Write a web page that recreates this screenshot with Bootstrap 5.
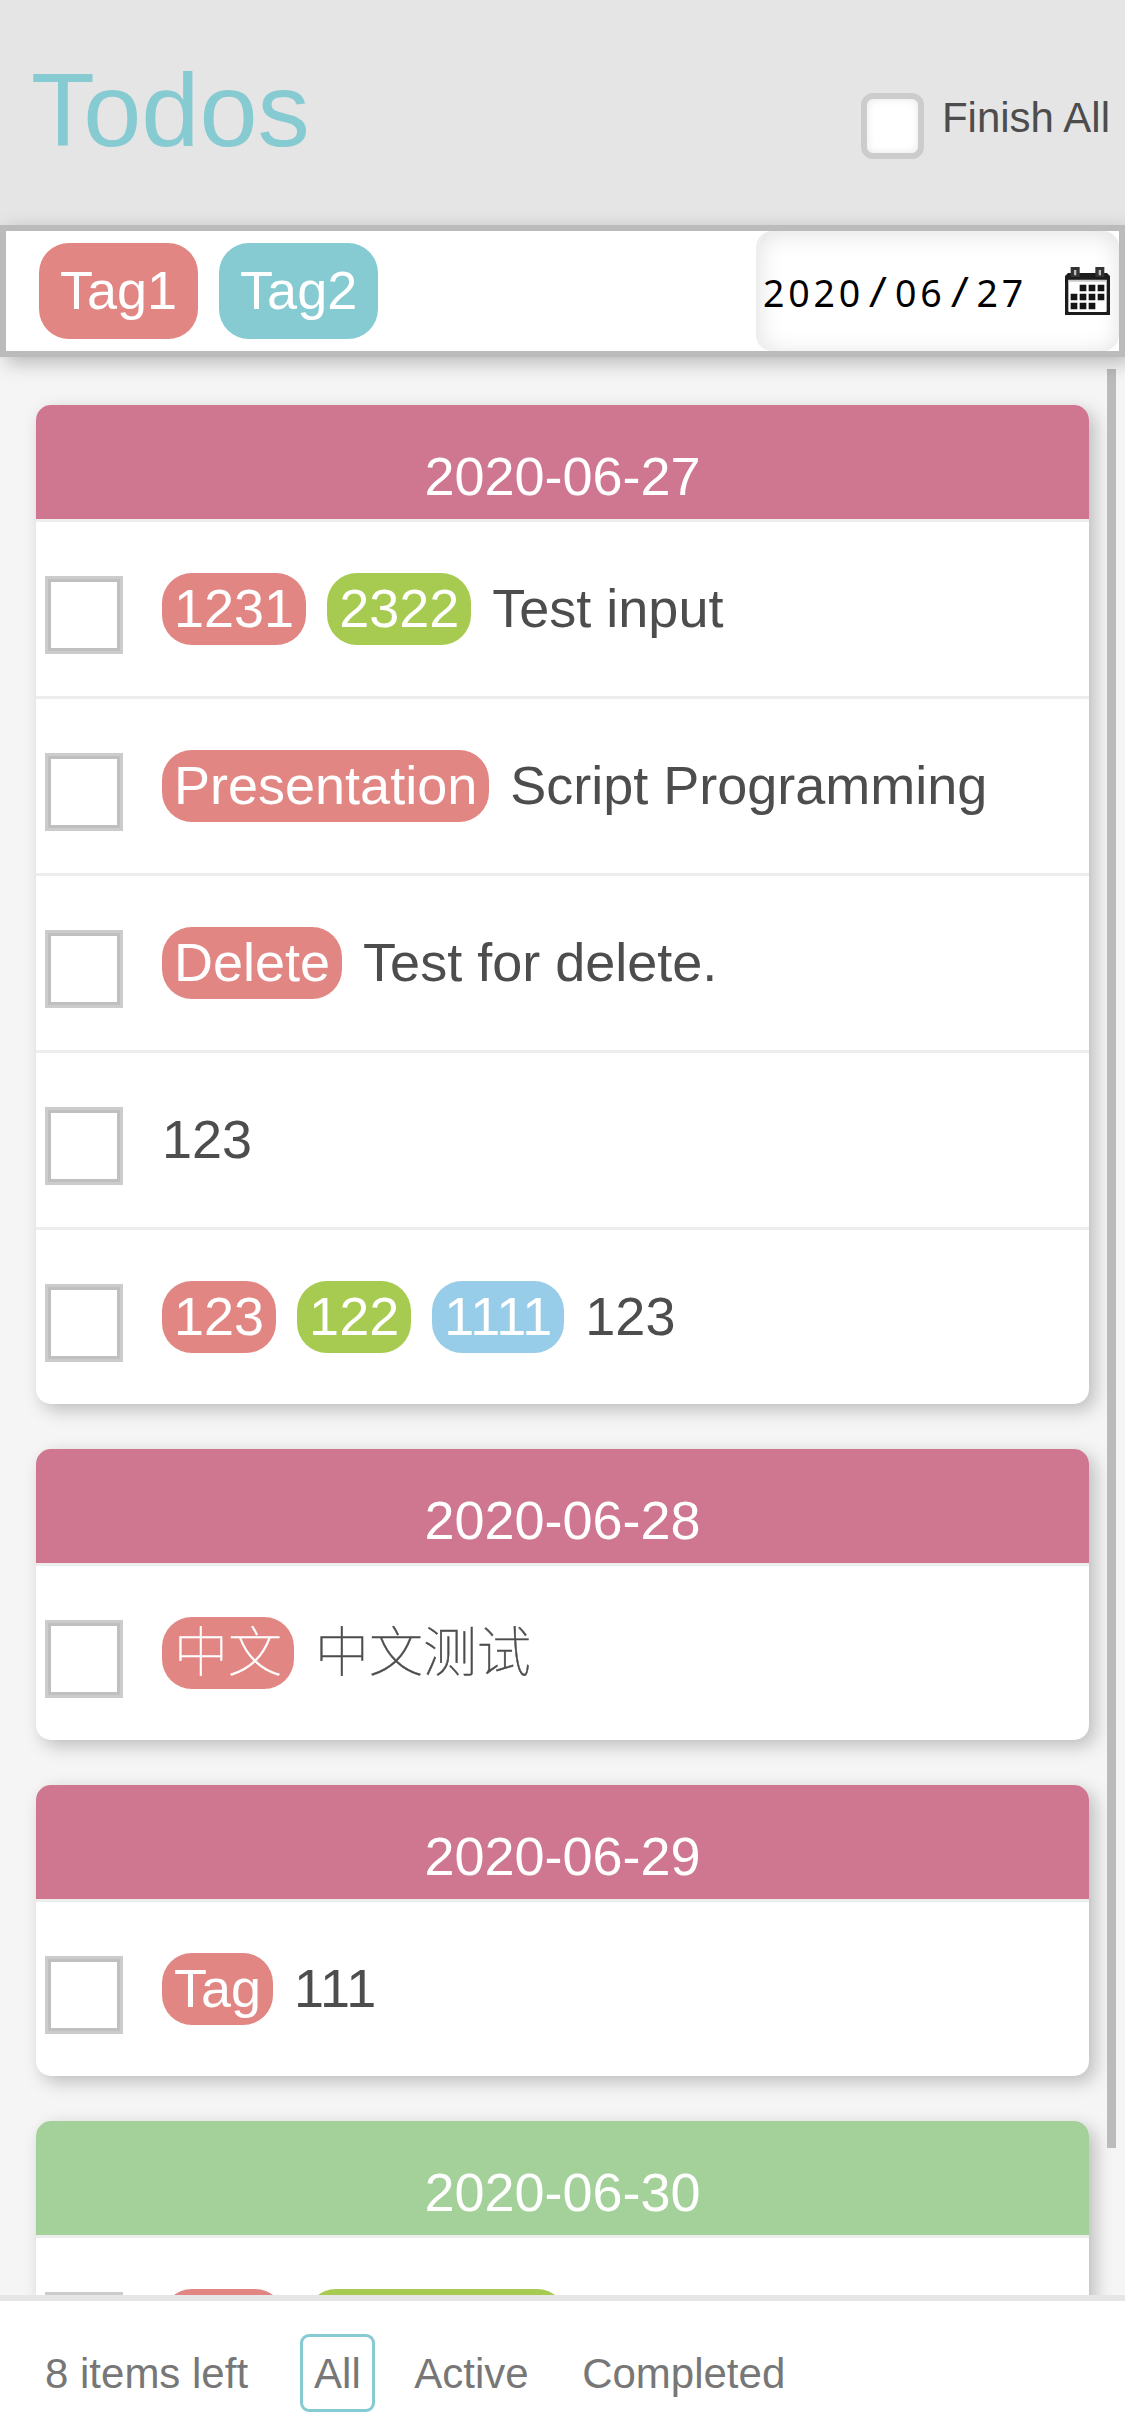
<!DOCTYPE html>
<html lang="en">
<head>
<meta charset="utf-8">
<meta name="viewport" content="width=device-width, initial-scale=1">
<title>Todos</title>
<link href="https://cdn.jsdelivr.net/npm/bootstrap@5.3.0/dist/css/bootstrap.min.css" rel="stylesheet">
<style>
  body { font-family: "Liberation Sans", "Noto Sans CJK SC", sans-serif; font-weight: 100; font-size: 54px; line-height: 1; color: #4d4d4d; background: #f5f5f5; }
  .app { height: 2436px; }
  .app-head { height: 225px; background: #e5e5e5; padding: 0 15px 0 31px; }
  .app-title { font-size: 104.5px; font-weight: 100; line-height: 1; color: #86cad2; margin-top: -4px; }
  .finish { font-size: 42px; gap: 18px; }
  .finish-box { width: 63px; height: 66px; border: 6px solid #ccc; border-radius: 12px; background: #fff; box-shadow: inset 0 0 9px rgba(0,0,0,.1); margin-top: 27px; }
  .finish-text { margin-top: 10px; }
  .filter-bar { height: 132px; border: 6px solid #bbb; background: #fff; box-shadow: 6px 6px 18px rgba(0,0,0,.25); z-index: 2; }
  .filter-tags { gap: 21px; padding-left: 33px; }
  .pill { display: inline-flex; align-items: center; height: 72px; padding: 0 12px 2px; border-radius: 30px; color: #fff; white-space: nowrap; }
  .pill-lg { height: 96px; padding: 0 21px 2px; }
  .c-red { background: #e18683; } .c-teal { background: #86cad2; } .c-lime { background: #a6cb50; } .c-blue { background: #97cde9; }
  .date-box { width: 363px; border-left: 3px solid #eee; border-radius: 16px; padding: 0 9px 0 4px; box-shadow: inset 0 3px 24px rgba(0,0,0,.12); color: #000; font-family: "Noto Sans", sans-serif; font-size: 37.5px; font-weight: 400; letter-spacing: 3.8px; }
  .date-box i { display: inline-block; width: 31px; font-style: normal; font-size: 42px; line-height: 1; letter-spacing: 0; text-align: center; padding-right: 3px; transform: skewX(-5deg); }
  .list-area { padding: 48px 36px 0; gap: 45px; }
  .day { border-radius: 15px; box-shadow: 6px 6px 18px rgba(0,0,0,.23); background: #fff; }
  .day-head { height: 114px; padding-top: 29px; line-height: 85px; background: #cf7691; color: #fff; border-radius: 15px 15px 0 0; }
  .day-head.today { background: #a3d199; }
  .todo { height: 177px; border-top: 3px solid #ededed; padding-left: 9px; gap: 39px; }
  .todo-box { width: 78px; height: 78px; border: 3px solid #ccc; box-shadow: inset 0 0 0 3px #bfbfbf; margin-top: 12px; }
  .todo-text { gap: 21px; }
  .todo-label { padding-bottom: 2px; }
  .zh { -webkit-text-stroke: .45px currentColor; }
  .zh .todo-label, .zh .pill { padding-bottom: 0; }
  .thumb { right: 9px; top: 12px; width: 9px; height: 1779px; background: #bbb; }
  .app-foot { height: 141px; border-top: 6px solid #e6e6e6; background: #fff; padding: 9px 0 0 45px; font-size: 42px; color: #777; z-index: 3; }
  .count { padding-top: 2px; }
  .view { height: 78px; padding: 0 11.5px; border: 3px solid transparent; border-radius: 9px; line-height: 74px; }
  .view.on { border-color: #86cad2; }
  .views { gap: 24.5px; margin-left: 51.5px; }
</style>
</head>
<body class="overflow-hidden">
<div class="app d-flex flex-column overflow-hidden">
  <header class="app-head d-flex justify-content-between align-items-center flex-shrink-0">
    <h1 class="app-title mb-0">Todos</h1>
    <div class="finish d-flex align-items-center">
      <span class="finish-box"></span><span class="finish-text">Finish All</span>
    </div>
  </header>
  <div class="filter-bar d-flex justify-content-between position-relative flex-shrink-0">
    <div class="filter-tags d-flex align-items-center">
      <span class="pill pill-lg c-red">Tag1</span><span class="pill pill-lg c-teal">Tag2</span>
    </div>
    <div class="date-box d-flex align-items-center justify-content-between">
      <span>2020<i>/</i>06<i>/</i>27</span>
      <svg width="45" height="48" viewBox="0 0 135 144">
        <path d="M5 40H130V139H5Z" fill="#fff"/>
        <path d="M9 18H126L135 27V144H0V27ZM10 39V132Q10 135 13 135H122Q125 135 125 132V39Z" fill="#1c1c1c" fill-rule="evenodd"/>
        <path d="M10 38H125V44H10Z" fill="#c9c9c9"/>
        <path d="M17 0H44V30H17ZM91 0H118V30H91Z" fill="#333"/>
        <path d="M27 9H34V25H27ZM101 9H108V25H101Z" fill="#bbb"/>
        <path d="M44 53h20v20h-20zM71 53h20v20h-20zM98 53h20v20h-20zM17 80h20v20h-20zM44 80h20v20h-20zM71 80h20v20h-20zM98 80h20v20h-20zM17 107h20v20h-20zM44 107h20v20h-20zM71 107h20v20h-20z" fill="#151515"/>
      </svg>
    </div>
  </div>
  <main class="list-area d-flex flex-column flex-grow-1 position-relative overflow-hidden">
    <section class="day flex-shrink-0">
      <div class="day-head text-center">2020-06-27</div>
      <div class="todo d-flex align-items-center"><span class="todo-box"></span><div class="todo-text d-flex align-items-center"><span class="pill c-red">1231</span><span class="pill c-lime">2322</span><span class="todo-label">Test input</span></div></div>
      <div class="todo d-flex align-items-center"><span class="todo-box"></span><div class="todo-text d-flex align-items-center"><span class="pill c-red">Presentation</span><span class="todo-label">Script Programming</span></div></div>
      <div class="todo d-flex align-items-center"><span class="todo-box"></span><div class="todo-text d-flex align-items-center"><span class="pill c-red">Delete</span><span class="todo-label">Test for delete.</span></div></div>
      <div class="todo d-flex align-items-center"><span class="todo-box"></span><div class="todo-text d-flex align-items-center"><span class="todo-label">123</span></div></div>
      <div class="todo d-flex align-items-center"><span class="todo-box"></span><div class="todo-text d-flex align-items-center"><span class="pill c-red">123</span><span class="pill c-lime">122</span><span class="pill c-blue">1111</span><span class="todo-label">123</span></div></div>
    </section>
    <section class="day flex-shrink-0">
      <div class="day-head text-center">2020-06-28</div>
      <div class="todo zh d-flex align-items-center"><span class="todo-box"></span><div class="todo-text d-flex align-items-center"><span class="pill c-red">中文</span><span class="todo-label">中文测试</span></div></div>
    </section>
    <section class="day flex-shrink-0">
      <div class="day-head text-center">2020-06-29</div>
      <div class="todo d-flex align-items-center"><span class="todo-box"></span><div class="todo-text d-flex align-items-center"><span class="pill c-red">Tag</span><span class="todo-label">111</span></div></div>
    </section>
    <section class="day flex-shrink-0">
      <div class="day-head today text-center">2020-06-30</div>
      <div class="todo d-flex align-items-center"><span class="todo-box"></span><div class="todo-text d-flex align-items-center"><span class="pill c-red" style="width:123px"></span><span class="pill c-lime" style="width:261px"></span></div></div>
    </section>
    <div class="thumb position-absolute"></div>
  </main>
  <footer class="app-foot d-flex align-items-center position-relative flex-shrink-0">
    <span class="count">8 items left</span>
    <nav class="views d-flex"><span class="view on">All</span><span class="view">Active</span><span class="view">Completed</span></nav>
  </footer>
</div>
<script src="https://cdn.jsdelivr.net/npm/bootstrap@5.3.0/dist/js/bootstrap.bundle.min.js"></script>
</body>
</html>
